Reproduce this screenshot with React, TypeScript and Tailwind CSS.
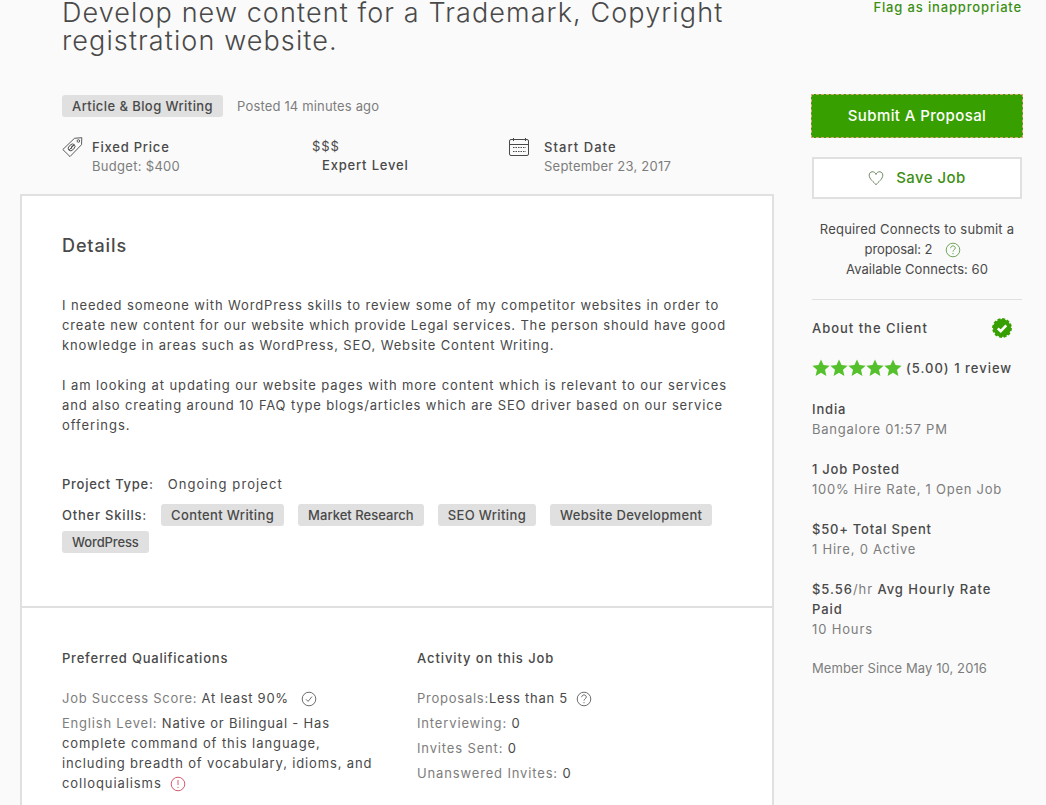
import type { ReactNode } from 'react';

function HelpIcon({ className = '', mark = 'question' }: { className?: string; mark?: 'question' | 'check' | 'alert' }) {
  return (
    <svg viewBox="0 0 16 16" fill="none" stroke="currentColor" strokeWidth="0.8" className={`mt-px inline-block size-4 shrink-0 ${className}`}>
      <circle cx="8" cy="8" r="6.8" />
      {mark === 'question' && <path d="M5.7 6.2c0-1.500 1-2.300 2.300-2.300s2.300.9 2.300 2.100c0 1.700-2.300 1.800-2.300 3.600M8 11v1.200" />}
      {mark === 'check' && <path d="M5 8.300l2.100 2.100L11 5.600" />}
      {mark === 'alert' && <path d="M8 4v5M8 10.800V12" />}
    </svg>
  );
}

function TagIcon() {
  return (
    <svg viewBox="0 0 21 21" fill="none" stroke="#494949" strokeWidth="0.9" className="h-[21px] w-[21px]">
      <path d="M.8 12.500L12.500 1.300l7.300-.6-.3 7L8 19.600z" />
      <circle cx="16.400" cy="4" r="1.300" />
      <ellipse cx="9.600" cy="10.400" rx="3.900" ry="2.700" transform="rotate(-45 9.600 10.400)" />
      <path d="M11.300 9.100c-1-.9-2.200-.2-1.700 1s0 2.200-1.600 1.400M12.100 7.900l-5 5" />
    </svg>
  );
}

function CalendarIcon() {
  return (
    <svg viewBox="0 0 20 18" fill="none" stroke="#494949" strokeWidth="1" className="mt-px h-[18px] w-5">
      <rect x=".5" y="1.500" width="19" height="16" rx="1.500" />
      <path d="M.5 6.500h19M4.500 0v3M16.500 0v3" />
      <path d="M4 9.500h13M4 13.500h13" strokeDasharray="1.500 1" />
    </svg>
  );
}

function Star() {
  return (
    <svg viewBox="0 0 18 18" fill="#54c02b" className="size-[18px]">
      <path d="M9 .5l2.500 5.600 6.100.6-4.600 4.100 1.400 6.200L9 13.700 3.600 17 5 10.800.4 6.700l6.100-.6z" />
    </svg>
  );
}

function VerifiedIcon() {
  return (
    <svg viewBox="0 0 20 20" className="size-5">
      <circle cx="10" cy="10" r="9" fill="#37a000" stroke="#37a000" strokeWidth="1.800" strokeDasharray="3 1.700" />
      <path d="M5.800 10.300l2.900 2.900 5.600-5.900" fill="none" stroke="#fff" strokeWidth="2.600" />
    </svg>
  );
}

function Tag({ children, className = '' }: { children: ReactNode; className?: string }) {
  return (
    <span className={`inline-flex h-[22px] items-center rounded-[3px] bg-[#e0e0e0] px-2.5 text-[13px] font-medium whitespace-nowrap ${className}`}>
      {children}
    </span>
  );
}

const activity = [
  { label: 'Interviewing:', value: '0' },
  { label: 'Invites Sent:', value: '0' },
  { label: 'Unanswered Invites:', value: '0' },
];

export default function App() {
  return (
    <div className="flex h-[805px] w-[1046px] overflow-hidden bg-[#fafafa] font-[Inter,sans-serif] text-[13px] leading-5 tracking-[0.85px] text-[#494949]">
      <main className="ml-5 w-[754px] shrink-0">
        <div className="h-[195px] px-[42px]">
          <h1 className="-mt-[1px] h-14 text-[27px] leading-7 font-light tracking-[1.1px] whitespace-nowrap">
            Develop new content for a Trademark, Copyright
            <br />
            registration website.
          </h1>
          <div className="mt-10 flex h-[22px] items-center gap-3.5">
            <Tag className="tracking-[0.42px]">Article &amp; Blog Writing</Tag>
            <span className="tracking-[0.16px] text-[#7d7d7d]">Posted 14 minutes ago</span>
          </div>
          <div className="mt-5 flex">
            <div className="flex w-[250px] gap-[9px]">
              <TagIcon />
              <div>
                <div className="font-medium tracking-[0.78px]">Fixed Price</div>
                <div className="-mt-px tracking-[0.3px] text-[#7d7d7d]">Budget: $400</div>
              </div>
            </div>
            <div className="w-[197px]">
              <div className="leading-[19px]">$$$</div>
              <div className="pl-2.5 leading-[19px] font-medium tracking-[0.82px]">Expert Level</div>
            </div>
            <div className="flex gap-[15px]">
              <CalendarIcon />
              <div>
                <div className="font-medium tracking-[1.05px]">Start Date</div>
                <div className="-mt-px tracking-[0.23px] text-[#7d7d7d]">September 23, 2017</div>
              </div>
            </div>
          </div>
        </div>

        <div className="h-[620px] border-2 border-[#e0e0e0] bg-white">
          <section className="h-[412px] border-b-2 border-[#e0e0e0] px-10 pt-9">
            <h2 className="h-[63px] text-[18px] leading-7 font-medium tracking-[0.9px]">Details</h2>
            <p className="whitespace-nowrap">
              <span className="tracking-[0.87px]">I needed someone with WordPress skills to review some of my competitor websites in order to</span>
              <br />
              <span className="tracking-[0.83px]">create new content for our website which provide Legal services. The person should have good</span>
              <br />
              <span className="tracking-[0.87px]">knowledge in areas such as WordPress, SEO, Website Content Writing.</span>
            </p>
            <p className="mt-5 whitespace-nowrap">
              <span className="tracking-[0.9px]">I am looking at updating our website pages with more content which is relevant to our services</span>
              <br />
              and also creating around 10 FAQ type blogs/articles which are SEO driver based on our service
              <br />
              <span className="tracking-[1px]">offerings.</span>
            </p>
            <div className="mt-[39px] flex gap-3.5">
              <span className="font-medium tracking-[0.74px]">Project Type:</span>
              <span className="tracking-[1.1px]">Ongoing project</span>
            </div>
            <div className="mt-2.5 flex flex-wrap gap-x-3.5 gap-y-[5px]">
              <span className="leading-[22px] font-medium tracking-[0.79px]">Other Skills:</span>
              <Tag className="tracking-[0.37px]">Content Writing</Tag>
              <Tag className="tracking-[0.03px]">Market Research</Tag>
              <Tag className="tracking-[0.37px]">SEO Writing</Tag>
              <Tag className="tracking-[0.33px]">Website Development</Tag>
              <Tag className="tracking-[-0.12px]">WordPress</Tag>
            </div>
          </section>

          <section className="flex px-10 pt-10">
            <div className="w-[355px]">
              <h3 className="mb-5 font-medium tracking-[0.78px]">Preferred Qualifications</h3>
              <div className="flex items-center tracking-[0.72px]">
                <span><span className="text-[#7d7d7d]">Job Success Score:</span> At least 90%</span>
                <HelpIcon mark="check" className="ml-3" />
              </div>
              <div className="mt-[5px] whitespace-nowrap">
                <span className="tracking-[0.8px]"><span className="text-[#7d7d7d]">English Level:</span> Native or Bilingual - Has</span>
                <br />
                <span className="tracking-[0.92px]">complete command of this language,</span>
                <br />
                including breadth of vocabulary, idioms, and
                <br />
                <span className="flex items-center tracking-[0.92px]">
                  colloquialisms
                  <HelpIcon mark="alert" className="ml-2 text-[#c9324b]" />
                </span>
              </div>
            </div>
            <div>
              <h3 className="mb-5 font-medium tracking-[0.9px]">Activity on this Job</h3>
              <div className="flex items-center tracking-[0.75px]">
                <span className="text-[#7d7d7d]">Proposals:</span>Less than 5
                <HelpIcon className="ml-2" />
              </div>
              {activity.map(item => (
                <div key={item.label} className="mt-[5px]">
                  <span className="text-[#7d7d7d]">{item.label}</span> {item.value}
                </div>
              ))}
            </div>
          </section>
        </div>
      </main>

      <aside className="ml-[38px] w-[210px] shrink-0">
        <div className="-mt-[3px] flex justify-end font-medium whitespace-nowrap text-[#3c8f14]">Flag as inappropriate</div>
        <button className="mt-[77px] -ml-px block h-[44px] w-[212px] border border-dashed border-[#d9a878] bg-[#37a000] text-[15px] font-medium tracking-[0.4px] text-white">
          Submit A Proposal
        </button>
        <button className="mt-[19px] flex h-[42px] w-[210px] items-center justify-center gap-3 border-2 border-[#e0e0e0] bg-white text-[15px] font-medium tracking-[0.45px] text-[#3c8f14]">
          <svg viewBox="0 0 16 16" fill="none" stroke="#5f7a50" strokeWidth="0.9" className="size-4">
            <path d="M8 14.800C6 12 1.200 9.200 1.200 5.200c0-4.200 5.600-4.700 6.800-.7 1.200-4 6.800-3.500 6.800.7C14.800 9.200 10 12 8 14.800z" />
          </svg>
          Save Job
        </button>
        <div className="mt-5 border-b border-[#e0e0e0] pb-5 text-center tracking-[0.2px] whitespace-nowrap">
          <div>Required Connects to submit a</div>
          <div className="flex items-center justify-center pr-2 tracking-[-0.08px]">
            proposal: 2
            <HelpIcon className="ml-[13px] text-[#4f8f33]" />
          </div>
          <div className="tracking-[0.04px]">Available Connects: 60</div>
        </div>
        <div className="mt-[18px] flex items-center justify-between pr-2.5 font-medium tracking-[0.98px]">
          About the Client
          <VerifiedIcon />
        </div>
        <div className="mt-5 flex items-center whitespace-nowrap">
          <Star />
          <Star />
          <Star />
          <Star />
          <Star />
          <span className="ml-1 font-medium tracking-[1px]">(5.00) 1 review</span>
        </div>
        <div className="mt-[21px]">
          <div className="font-medium">India</div>
          <div className="tracking-[0.77px] text-[#7d7d7d]">Bangalore 01:57 PM</div>
        </div>
        <div className="mt-5 tracking-[0.75px]">
          <div className="font-medium">1 Job Posted</div>
          <div className="whitespace-nowrap text-[#7d7d7d]">100% Hire Rate, 1 Open Job</div>
        </div>
        <div className="mt-5 tracking-[0.78px]">
          <div className="font-medium">$50+ Total Spent</div>
          <div className="text-[#7d7d7d]">1 Hire, 0 Active</div>
        </div>
        <div className="mt-5">
          <div className="font-medium tracking-[0.95px] whitespace-nowrap">
            $5.56<span className="font-normal text-[#7d7d7d]">/hr</span> Avg Hourly Rate
            <br />
            Paid
          </div>
          <div className="text-[#7d7d7d]">10 Hours</div>
        </div>
        <div className="mt-[19px] tracking-[0.1px] whitespace-nowrap text-[#7d7d7d]">Member Since May 10, 2016</div>
      </aside>
    </div>
  );
}
